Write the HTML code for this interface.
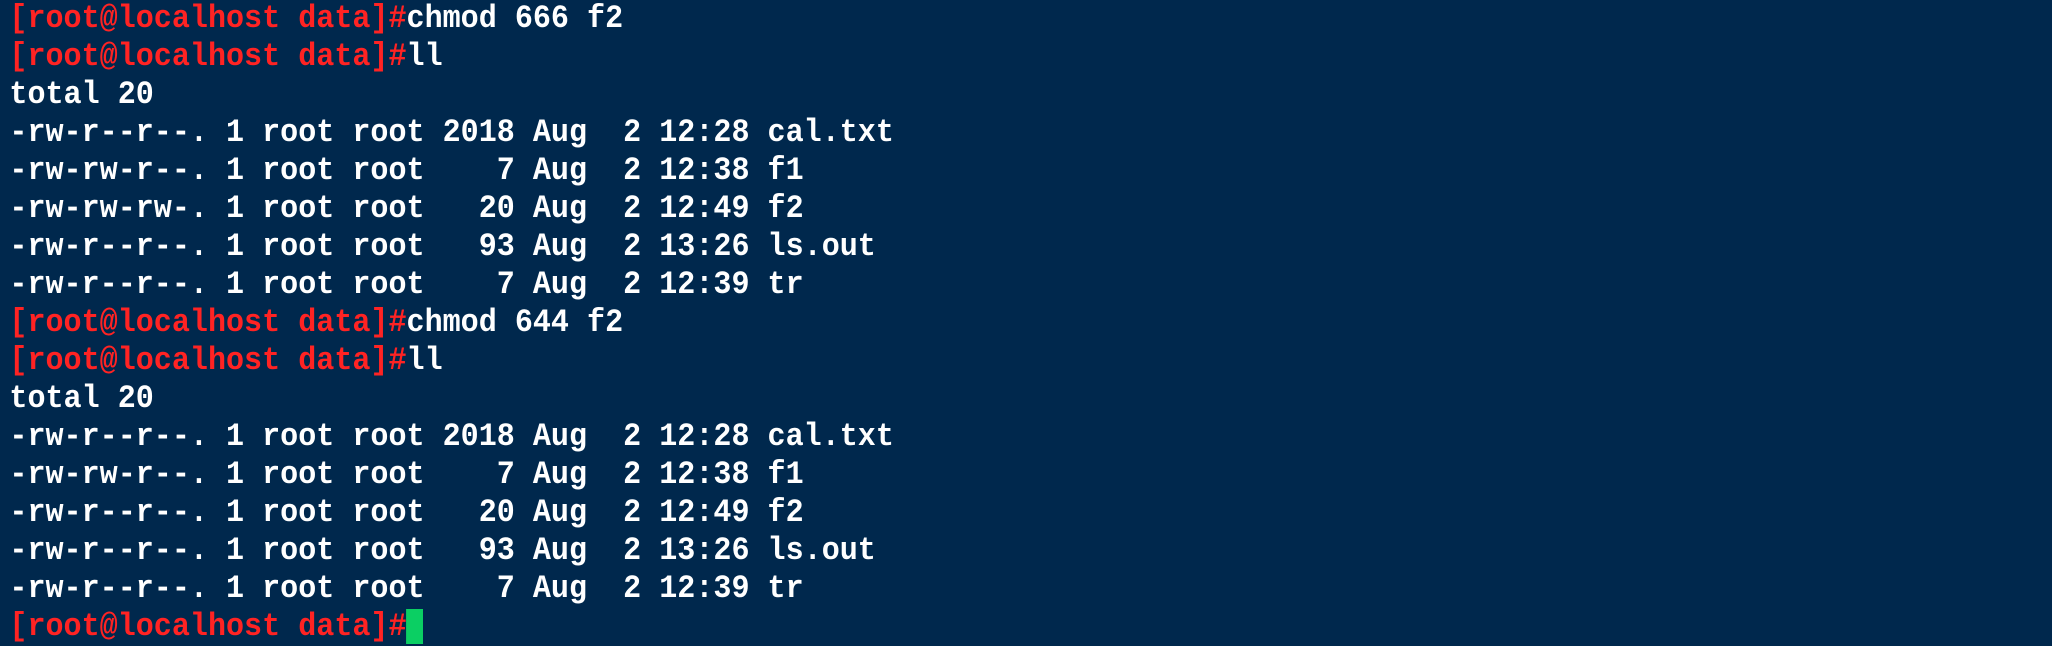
<!DOCTYPE html>
<html><head><meta charset="utf-8"><style>
html,body{margin:0;padding:0;background:#00284d;width:2052px;height:646px;overflow:hidden}
pre{margin:0;padding:0 0 0 10px;font-family:"Liberation Mono","DejaVu Sans Mono",monospace;font-size:32px;line-height:38px;color:#fff;font-weight:bold;transform:scaleX(0.94);transform-origin:0 0}
.r{color:#ff2323}
.c{display:inline-block;width:18px;height:35px;background:#0bcf63;vertical-align:top;margin-top:1px}
</style></head><body><pre><span class="r">[root@localhost data]#</span>chmod 666 f2
<span class="r">[root@localhost data]#</span>ll
total 20
-rw-r--r--. 1 root root 2018 Aug  2 12:28 cal.txt
-rw-rw-r--. 1 root root    7 Aug  2 12:38 f1
-rw-rw-rw-. 1 root root   20 Aug  2 12:49 f2
-rw-r--r--. 1 root root   93 Aug  2 13:26 ls.out
-rw-r--r--. 1 root root    7 Aug  2 12:39 tr
<span class="r">[root@localhost data]#</span>chmod 644 f2
<span class="r">[root@localhost data]#</span>ll
total 20
-rw-r--r--. 1 root root 2018 Aug  2 12:28 cal.txt
-rw-rw-r--. 1 root root    7 Aug  2 12:38 f1
-rw-r--r--. 1 root root   20 Aug  2 12:49 f2
-rw-r--r--. 1 root root   93 Aug  2 13:26 ls.out
-rw-r--r--. 1 root root    7 Aug  2 12:39 tr
<span class="r">[root@localhost data]#</span><span class="c"></span></pre></body></html>
